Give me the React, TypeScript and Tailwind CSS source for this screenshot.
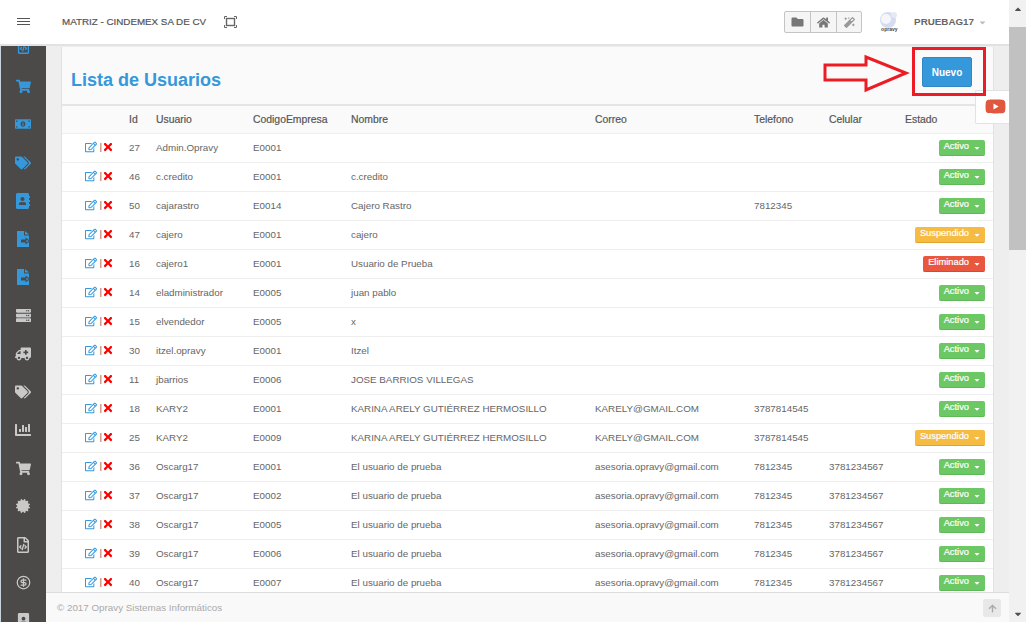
import { FaFolder, FaHome, FaMagic, FaCaretDown, FaCaretUp, FaTimes, FaRegEdit, FaShoppingCart, FaMoneyBillAlt, FaTags, FaAddressBook, FaServer, FaAmbulance, FaChartBar, FaCertificate, FaRegFileCode, FaPortrait, FaYoutube, FaArrowUp } from "react-icons/fa";
import { LuCircleDollarSign } from "react-icons/lu";

const rows = [
  ["27", "Admin.Opravy", "E0001", "", "", "", "", "Activo"],
  ["46", "c.credito", "E0001", "c.credito", "", "", "", "Activo"],
  ["50", "cajarastro", "E0014", "Cajero Rastro", "", "7812345", "", "Activo"],
  ["47", "cajero", "E0001", "cajero", "", "", "", "Suspendido"],
  ["16", "cajero1", "E0001", "Usuario de Prueba", "", "", "", "Eliminado"],
  ["14", "eladministrador", "E0005", "juan pablo", "", "", "", "Activo"],
  ["15", "elvendedor", "E0005", "x", "", "", "", "Activo"],
  ["30", "itzel.opravy", "E0001", "Itzel", "", "", "", "Activo"],
  ["11", "jbarrios", "E0006", "JOSE BARRIOS VILLEGAS", "", "", "", "Activo"],
  ["18", "KARY2", "E0001", "KARINA ARELY GUTIÉRREZ HERMOSILLO", "KARELY@GMAIL.COM", "3787814545", "", "Activo"],
  ["25", "KARY2", "E0009", "KARINA ARELY GUTIÉRREZ HERMOSILLO", "KARELY@GMAIL.COM", "3787814545", "", "Suspendido"],
  ["36", "Oscarg17", "E0001", "El usuario de prueba", "asesoria.opravy@gmail.com", "7812345", "3781234567", "Activo"],
  ["37", "Oscarg17", "E0002", "El usuario de prueba", "asesoria.opravy@gmail.com", "7812345", "3781234567", "Activo"],
  ["38", "Oscarg17", "E0005", "El usuario de prueba", "asesoria.opravy@gmail.com", "7812345", "3781234567", "Activo"],
  ["39", "Oscarg17", "E0006", "El usuario de prueba", "asesoria.opravy@gmail.com", "7812345", "3781234567", "Activo"],
  ["40", "Oscarg17", "E0007", "El usuario de prueba", "asesoria.opravy@gmail.com", "7812345", "3781234567", "Activo"],
];

const estadoStyles: Record<string, string> = {
  Activo: "bg-[#6cc864] border-[#5fb858]",
  Suspendido: "bg-[#f6bb42] border-[#e0a32e]",
  Eliminado: "bg-[#e9573f] border-[#d24a34]",
};

const blue = "text-[#3498db]";
const gray = "text-[#c9c9c9]";

function FileArrow() {
  return (
    <svg viewBox="0 0 15 16" className={`h-[16px] w-[15px] ${blue}`}>
      <path d="M1 0H8V4.5H13V16H1Z" fill="currentColor" />
      <path d="M9 0L13 3.5H9Z" fill="currentColor" />
      <path d="M5 8.5H9.5V6.5L14.5 10L9.5 13.5V11.5H5Z" fill="#4b4a48" />
      <path d="M10.5 8.8L12.8 10L10.5 11.4Z" fill="currentColor" />
    </svg>
  );
}

const sideIcons = [
  <FaRegFileCode className={`h-[15px] w-[15px] -translate-y-[2px] ${blue}`} />,
  <FaShoppingCart className={`h-[15px] w-[15px] ${blue}`} />,
  <FaMoneyBillAlt className={`h-[16px] w-[16px] ${blue}`} />,
  <FaTags className={`h-[16px] w-[16px] ${blue}`} />,
  <FaAddressBook className={`h-[16px] w-[16px] ${blue}`} />,
  <FileArrow />,
  <FileArrow />,
  <FaServer className={`h-[15px] w-[15px] ${gray}`} />,
  <FaAmbulance className={`h-[16px] w-[16px] -scale-x-100 ${gray}`} />,
  <FaTags className={`h-[16px] w-[16px] ${gray}`} />,
  <FaChartBar className={`h-[16px] w-[16px] ${gray}`} />,
  <FaShoppingCart className={`h-[15px] w-[15px] ${gray}`} />,
  <FaCertificate className={`h-[14px] w-[14px] ${gray}`} />,
  <FaRegFileCode className={`h-[16px] w-[16px] ${gray}`} />,
  <LuCircleDollarSign className={`h-[15px] w-[15px] ${gray}`} />,
  <FaPortrait className={`h-[15px] w-[15px] ${gray}`} />,
];

const headers = ["", "Id", "Usuario", "CodigoEmpresa", "Nombre", "Correo", "Telefono", "Celular", "Estado"];

function Logo() {
  return (
    <div className="relative h-[22px] w-[21px]">
      <svg viewBox="0 0 21 18" className="h-[18px] w-[21px]">
        <circle cx="10" cy="9" r="8" fill="#d5dcef" />
        <circle cx="8" cy="8" r="5" fill="#f5f6fb" />
        <circle cx="16" cy="4" r="3" fill="#e6e9f2" />
      </svg>
      <span className="absolute left-[3px] top-[15px] text-[5px] leading-[6px] font-bold text-[#444]">opravy</span>
    </div>
  );
}

export default function App() {
  return (
    <div className="relative flex h-[622px] w-[1026px] overflow-hidden bg-white font-['Liberation_Sans',Arial,sans-serif] text-[9.8px] text-[#666]">
      <div className="flex min-w-0 flex-1 flex-col">
        <header className="z-10 flex h-[46px] shrink-0 items-center border-b-2 border-[#e2e2e2] bg-white pr-[22px]">
          <svg viewBox="0 0 13 8" className="ml-[17px] h-[8px] w-[13px]">
            <path d="M0 .5H13M0 3.5H13M0 6.5H13" stroke="#555" strokeWidth="1" />
          </svg>
          <span className="ml-[32px] text-[9.8px] text-[#555] [-webkit-text-stroke:0.2px_#555]">MATRIZ - CINDEMEX SA DE CV</span>
          <svg viewBox="0 0 13 12" className="ml-[18px] h-[12px] w-[13px] text-[#666]" fill="none" stroke="currentColor">
            <path d="M3 .5H.5V3M10 .5H12.5V3M3 11.5H.5V9M10 11.5H12.5V9" />
            <rect x="2.5" y="2.5" width="8" height="7" strokeWidth="1.4" />
          </svg>
          <div className="ml-auto flex h-[22px] rounded-[2px] border border-[#c4c4c4] bg-[#f5f5f5] text-[#777]">
            <div className="flex w-[26px] items-center justify-center border-r border-[#c4c4c4]"><FaFolder className="h-[12px] w-[13px]" /></div>
            <div className="flex w-[26px] items-center justify-center border-r border-[#c4c4c4]"><FaHome className="h-[13px] w-[13px]" /></div>
            <div className="flex w-[24px] items-center justify-center"><FaMagic className="h-[11px] w-[11px] text-[#999]" /></div>
          </div>
          <div className="ml-[16px]"><Logo /></div>
          <span className="ml-[15px] text-[9.8px] font-bold text-[#666]">PRUEBAG17</span>
          <FaCaretDown className="ml-[4px] h-[9px] w-[9px] text-[#bbb]" />
        </header>

        <div className="flex min-h-0 flex-1">
          <aside className="flex w-[46px] shrink-0 flex-col overflow-hidden border-l border-[#c9d3de] bg-[#4b4a48]">
            <div className="-mt-[17px] flex flex-col">
              {sideIcons.map((icon, i) => (
                <div key={i} className="flex h-[38.2px] shrink-0 items-center justify-center pr-[1px]">{icon}</div>
              ))}
            </div>
          </aside>

          <div className="flex min-w-0 flex-1 flex-col">
            <main className="min-h-0 flex-1 overflow-hidden bg-[#eeeeee] px-[15px] pt-[1px]">
              <div className="border-x border-[#e2e2e2] bg-white">
                <div className="flex h-[59px] justify-between border-b-2 border-[#e5e5e5] bg-[#fafafa] pl-[9px] pr-[21px]">
                  <h1 className={`mt-[22px] text-[18px] leading-[22px] font-bold ${blue}`}>Lista de Usuarios</h1>
                  <button className="mt-[10px] h-[30px] w-[50px] rounded-[2px] border border-[#2f88c5] bg-[#3498db] text-[10px] font-bold text-white">Nuevo</button>
                </div>
                <table className="w-full table-fixed border-collapse">
                  <colgroup>
                    <col className="w-[59px]" /><col className="w-[27px]" /><col className="w-[97px]" /><col className="w-[98px]" /><col className="w-[244px]" /><col className="w-[159px]" /><col className="w-[75px]" /><col className="w-[76px]" /><col />
                  </colgroup>
                  <thead>
                    <tr className="h-[27px] border-b border-[#eeeeee] bg-[#fafafa]">
                      {headers.map((h, i) => (
                        <th key={i} className="px-[8px] pt-[2px] text-left text-[10.4px] font-normal text-[#555] [-webkit-text-stroke:0.2px_#555]">{h}</th>
                      ))}
                    </tr>
                  </thead>
                  <tbody>
                    {rows.map((r, i) => (
                      <tr key={i} className="h-[29px] border-b border-[#eeeeee]">
                        <td className="p-0">
                          <div className="-mt-[2px] flex items-center justify-end pr-[7px] leading-none">
                            <FaRegEdit className="mr-[2px] h-[12px] w-[12px] text-[#3498db]" />
                            <span className="text-[#666]">|</span>
                            <FaTimes className="h-[12px] w-[12px] text-[#ff0000]" />
                          </div>
                        </td>
                        {r.slice(0, 7).map((c, j) => (
                          <td key={j} className="overflow-visible whitespace-nowrap px-[8px] pt-[2px]">{c}</td>
                        ))}
                        <td className="px-[8px]">
                          <div className="flex justify-end">
                            <span className={`flex h-[16px] items-center gap-[4px] rounded-[2px] border-b pl-[5px] pr-[4px] text-[9.3px] leading-none text-white [-webkit-text-stroke:0.2px_#fff] ${estadoStyles[r[7]]}`}>
                              {r[7]}
                              <FaCaretDown className="h-[8px] w-[8px] translate-y-[1px]" />
                            </span>
                          </div>
                        </td>
                      </tr>
                    ))}
                  </tbody>
                </table>
              </div>
            </main>

            <footer className="z-10 flex h-[30px] shrink-0 items-center justify-between border-t border-[#dcdcdc] bg-[#f9f9f9] pl-[11px] pr-[8px] pt-[1px] text-[9.8px] text-[#aaaaaa]">
              <span>© 2017 Opravy Sistemas Informáticos</span>
              <div className="flex h-[18px] w-[18px] items-center justify-center rounded-[2px] bg-[#e8e8e8]">
                <FaArrowUp className="h-[9px] w-[9px] text-[#aaa]" />
              </div>
            </footer>
          </div>
        </div>
      </div>

      {/* scrollbar */}
      <div className="flex w-[17px] shrink-0 flex-col items-center bg-[#f1f1f1]">
        <div className="flex h-[17px] items-center justify-center"><FaCaretUp className="h-[10px] w-[10px] text-[#505050]" /></div>
        <div className="mt-[10px] h-[223px] w-full bg-[#c1c1c1]" />
        <div className="mt-auto flex h-[17px] items-center justify-center"><FaCaretDown className="h-[10px] w-[10px] text-[#505050]" /></div>
      </div>

      {/* youtube tab */}
      <div className="absolute left-[975px] top-[90px] flex h-[34px] w-[34px] items-center justify-center rounded-l-[2px] border border-r-0 border-[#e2e2e2] bg-white pb-[1px] pl-[5px]">
        <FaYoutube className="h-[21px] w-[21px] text-[#e1563f]" />
      </div>

      {/* red annotation */}
      <div className="absolute left-[912px] top-[47px] h-[49px] w-[74px] border-[3px] border-[#ed1c24]" />
      <svg className="absolute left-[820px] top-[50px]" width="92" height="46" viewBox="0 0 92 46">
        <path d="M5 15H46V7L86 23L46 40V30H5Z" fill="none" stroke="#ed1c24" strokeWidth="3" />
      </svg>
    </div>
  );
}
